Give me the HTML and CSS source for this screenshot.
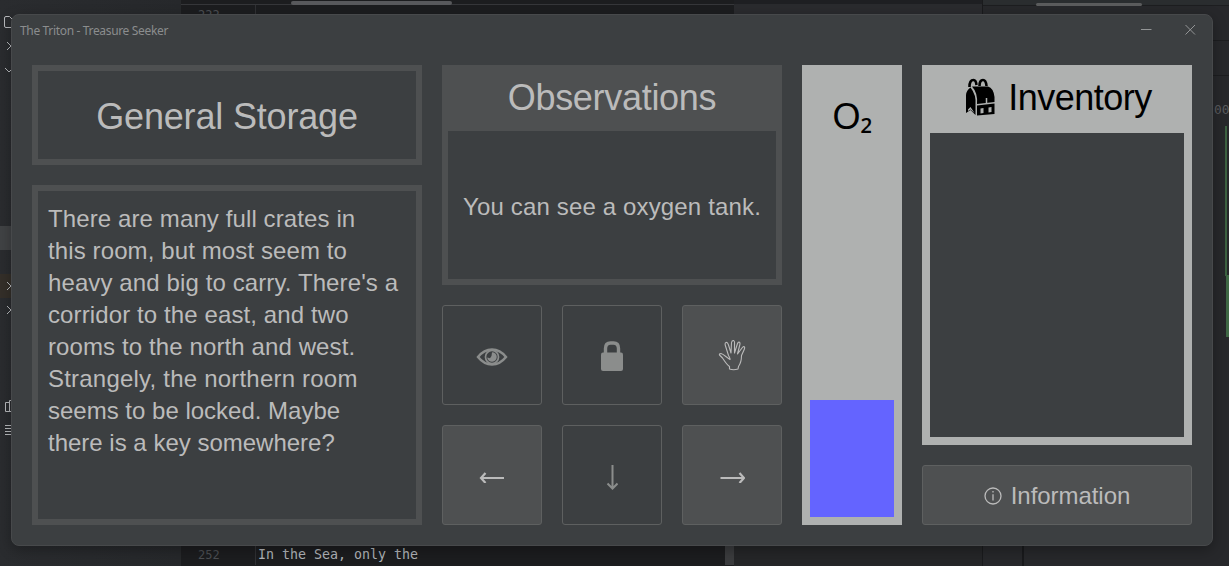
FILE: index.html
```html
<!DOCTYPE html>
<html lang="en">
<head>
<meta charset="utf-8">
<title>The Triton - Treasure Seeker</title>
<link rel="stylesheet" href="styles.css">
</head>
<body>
<div class="desktop">
  <aside class="tree">
    <svg class="tree-icons" width="12" height="566" viewBox="0 0 12 566" fill="none">
      <path class="row-selected" d="M0 226h12v24H0z"/>
      <path class="row-excluded" d="M0 274h12v24H0z"/>
      <path class="stroke" d="M12 27.500H6Q4.500 27.500 4.500 26V18Q4.500 16.500 6 16.500H9.500L12 19"/>
      <path class="stroke" d="M7 42l4 4-4 4M5 68l4 4 4-4M7 282l4 4-4 4M7 306l4 4-4 4"/>
      <path class="stroke" d="M12 411.500H5.500V402.500H9.500M9.500 411V400.500H12M5 425.500h7M5 428.500h7M5 431.500h7M5 434.500h7"/>
    </svg>
  </aside>
  <section class="editor">
    <div class="tabs"><span class="tab-thumb"></span></div>
    <div class="line first"><span class="num">222</span><span class="code"></span></div>
    <div class="line last"><span class="num">252</span><span class="code">In the Sea, only the</span></div>
  </section>
  <section class="side">
    <div class="side-top"></div>
    <div class="side-bottom"></div>
  </section>
  <section class="console">
    <div class="console-top"><span class="console-thumb"></span></div>
    <div class="bar"></div>
    <div class="bar"></div>
    <div class="output"><span class="digits">00</span></div>
    <div class="console-foot"></div>
  </section>
</div>

<main class="window">
  <header class="titlebar">
    <span class="title">The Triton - Treasure Seeker</span>
    <svg class="controls" width="58" height="14" viewBox="0 0 58 14" fill="none">
      <path d="M1 6.500h10.500M45.500 2l9.500 9.500M55 2l-9.500 9.500"/>
    </svg>
  </header>
  <div class="content">
    <div class="column">
      <h1 class="panel room">General Storage</h1>
      <div class="panel story">There are many full crates in<br>this room, but most seem to<br>heavy and big to carry. There's a<br>corridor to the east, and two<br>rooms to the north and west.<br><span class="loose">Strangely, the northern room</span><br><span class="tight">seems to be locked. Maybe</span><br><span class="tight">there is a key somewhere?</span></div>
    </div>
    <div class="column">
      <section class="panel observations">
        <h2 class="heading">Observations</h2>
        <p class="seen">You can see a oxygen tank.</p>
      </section>
      <div class="actions">
        <button class="btn off" aria-label="Look">
          <svg width="32" height="20" viewBox="0 0 32 20" fill="none" stroke="currentColor">
            <path stroke-width="2.500" d="M2 10Q8 2.500 16 2.500T30 10Q24 17.500 16 17.500T2 10Z"/>
            <circle cx="16" cy="10" r="6.500" stroke-width="1.700"/>
            <path d="M16 5.200A4.800 4.800 0 1 1 11.200 10.500L14 11.200L15.500 9Z" fill="currentColor" stroke="none"/>
          </svg>
        </button>
        <button class="btn off" aria-label="Unlock">
          <svg class="lock" width="24" height="32" viewBox="0 0 24 32" fill="none">
            <path d="M5.500 14V8.500Q5.500 3 10.500 3H13.500Q18.500 3 18.500 8.500V14" stroke="currentColor" stroke-width="3.400"/>
            <rect x="1" y="12.500" width="22" height="18.500" rx="2" fill="currentColor"/>
          </svg>
        </button>
        <button class="btn" aria-label="Take">
          <svg class="hand" width="28" height="32" viewBox="0 0 28 32" fill="none" stroke="currentColor" stroke-width="1.100" stroke-linejoin="round">
            <path d="M11.500 30V27.500C8.500 25.500 6.500 22 4.500 19L1.500 16Q1 14.500 3 14.500C5.500 15 8.500 18.500 12 20.500Q12.500 19.500 10.500 16.500L7.500 7Q6.500 4 8 3.500Q9.500 3 10.500 6L13 14L13.500 3.500Q14 1.300 15.500 1.500Q16.800 2 16.500 4.500V14L19.500 4.500Q20.500 2.500 21.500 3.200Q22.500 4 21.500 7L19.500 15L24 9Q25.500 7 26.500 8Q27 9 26 11L23.500 16.500C23.500 22 23 24 20.500 27.500L20 30Q15.500 31.500 11.500 30Z"/>
          </svg>
        </button>
        <button class="btn" aria-label="West">
          <svg width="26" height="12" viewBox="0 0 26 12" fill="none" stroke="currentColor" stroke-width="2.200"><path d="M25 7H2.500M6.500 2L2 7L6.500 12"/></svg>
        </button>
        <button class="btn off" aria-label="South">
          <svg width="12" height="26" viewBox="0 0 12 26" fill="none" stroke="currentColor" stroke-width="2"><path d="M6.500 1V24M1.500 19.500L6.500 24.500L11.500 19.500"/></svg>
        </button>
        <button class="btn" aria-label="East">
          <svg width="26" height="12" viewBox="0 0 26 12" fill="none" stroke="currentColor" stroke-width="2.200"><path d="M1.500 7H25M20.500 2L25 7L20.500 12"/></svg>
        </button>
      </div>
    </div>
    <div class="oxygen">
      <div class="oxygen-label">O<span class="two">₂</span></div>
      <div class="oxygen-level"></div>
    </div>
    <div class="column">
      <section class="inventory">
        <h2 class="inventory-title">
          <svg class="pack" width="32" height="38" viewBox="0 0 32 38" fill="none">
            <path d="M5.500 9Q5.500 2 9.500 2Q12 2 12.500 7M15.500 8Q15.500 2 19 2Q22 2 22.500 8" stroke="#000" stroke-width="2.600"/>
            <path d="M8 8.500H24Q29.500 10 30.500 19V24L13 26Q14 15 8 8.500Z" fill="#000"/>
            <path d="M6.500 9.500Q12.500 17 11.500 27V37L6.500 32L2 35V17Q2.500 12 6.500 9.500Z" fill="#000"/>
            <path d="M13 27.500L30.500 25.500V36L13 37.500Z" fill="#000"/>
            <path d="M22.500 20V26" stroke="#afb1b0" stroke-width="1.500"/>
            <path d="M16.500 30.500l3-.5v5l-3 .5zM24.500 29.500l3-.5v5l-3 .5zM4 31.500l2.500-2.500 4 6-4-3.500-2.500 1.500z" fill="#afb1b0"/>
          </svg>
          <span class="inventory-text">Inventory</span>
        </h2>
        <div class="slots"></div>
      </section>
      <button class="btn info">
        <svg width="18" height="18" viewBox="0 0 18 18" fill="none" stroke="currentColor" stroke-width="1.300"><circle cx="9" cy="9" r="8"/><path d="M9 7.200V13.500M9 4V5.500"/></svg>
        <span>Information</span>
      </button>
    </div>
  </div>
</main>
</body>
</html>
```
FILE: styles.css
```css
* { box-sizing: border-box; }
body { margin: 0; width: 1229px; height: 566px; overflow: hidden; font-family: "Liberation Sans", Arial, sans-serif; }
h1, h2, p { margin: 0; font-weight: 400; }

.desktop { display: grid; grid-template-columns: 180px 554px 248px 1fr; height: 566px; background: #2b2d30; }
.tree { background: linear-gradient(90deg, #2a2c2f, #26282b); }
.tree-icons { display: block; }
.stroke { stroke: #b8babd; }
.row-selected { fill: #414345; }
.row-excluded { fill: #342f29; }

.editor { display: flex; flex-direction: column; background: #1c1d1f; border-left: 1px solid #27292b; font: 13.300px "DejaVu Sans Mono", monospace; overflow: hidden; }
.tabs { height: 5px; border-bottom: 1px solid #36373a; padding: 1px 0 0 110px; }
.tab-thumb { display: block; width: 161px; height: 4px; border-radius: 2px; background: #58595c; }
.line { display: flex; height: 20px; line-height: 20px; }
.num { width: 75px; padding-left: 17px; font-size: 12px; color: #4c4f53; border-right: 1px solid #303134; }
.code { padding-left: 2px; color: #b2b5ba; }
.last { margin-top: auto; margin-bottom: 1px; border-right: 9px solid #3b3c3e; }

.side { display: flex; flex-direction: column; justify-content: space-between; background: #252628; }
.side-top { height: 14px; background: #2a2b2e; border-top: 4px solid #1e1f22; }
.side-bottom { height: 20px; background: #252628; }

.console { display: flex; flex-direction: column; border-left: 1px solid #1a1b1d; background: #27282b; }
.console-top { height: 6px; background: #2a2d2f; border-bottom: 1px solid #1d1e20; padding: 3px 0 0 53px; }
.console-thumb { display: block; width: 106px; height: 3px; border-radius: 2px; background: #5b5c5d; }
.bar { height: 35px; border-bottom: 1px solid #1d1e20; }
.output { flex: 1; padding: 26px 0 0 231px; }
.digits { display: block; width: 15px; height: 237px; overflow: hidden; font: 13px "DejaVu Sans Mono", monospace; color: #5a5c5e; background: linear-gradient(#3c6241, #3c6241) 11px 24px / 2px 150px no-repeat, linear-gradient(#3f6845, #3f6845) 12px 173px / 3px 62px no-repeat; }
.console-foot { height: 20px; margin-left: 39px; border-left: 2px solid #191a1c; }

.window { position: absolute; left: 11px; top: 14px; width: 1202px; height: 532px; padding: 0 20px 20px; background: #3c3f41; border: 1px solid #47494b; border-radius: 8px; box-shadow: 0 4px 14px rgba(0, 0, 0, .3); }
.titlebar { display: flex; justify-content: space-between; height: 50px; margin-left: -12px; padding-top: 8px; }
.title { font: 12px/16px "Noto Sans", sans-serif; letter-spacing: -.340px; color: #8b8d8e; }
.controls { margin-right: -6px; stroke: #939596; }
.content { display: grid; grid-template-columns: 390px 340px 100px 270px; gap: 20px; height: 460px; color: #bbb; }
.column { display: flex; flex-direction: column; gap: 20px; }
.panel { border: 6px solid #4e5051; }
.room { height: 100px; font-size: 36px; line-height: 92px; letter-spacing: -.180px; text-align: center; }
.story { flex: 1; padding: 12px 0 0 10px; font-size: 24px; line-height: 32px; letter-spacing: .110px; white-space: nowrap; }
.loose { letter-spacing: .210px; }
.tight { letter-spacing: 0; }
.observations { display: flex; flex-direction: column; height: 220px; }
.heading { flex: 0 0 60px; font-size: 36px; line-height: 54px; letter-spacing: -.300px; text-align: center; background: #4e5051; }
.seen { flex: 1; font-size: 24px; line-height: 152px; letter-spacing: .150px; text-align: center; white-space: nowrap; }
.actions { display: grid; grid-template-columns: repeat(3, 100px); grid-auto-rows: 100px; gap: 20px; }
.btn { display: flex; align-items: center; justify-content: center; padding: 4px 0 0; font: inherit; color: #bbb; background: #4e5051; border: 1px solid #5e6060; border-radius: 3px; }
.off { color: #8b8d8c; background: #3c3f41; }
.lock { margin-bottom: 3px; }
.hand { margin-bottom: 4px; }
.info { height: 60px; gap: 9px; padding: 2px 0 0; font-size: 24px; }
.info span { letter-spacing: -.050px; }
.oxygen { display: flex; flex-direction: column; justify-content: space-between; padding: 8px; background: #afb1b0; }
.oxygen-label { padding: 23px 0 0 1px; font-size: 36px; line-height: 41px; text-align: center; color: #000; }
.two { font-family: "Noto Sans", sans-serif; font-size: 34px; line-height: 0; }
.oxygen-level { height: 117px; background: #6464ff; }
.inventory { display: flex; flex-direction: column; height: 380px; padding: 0 8px 8px; background: #afb1b0; }
.inventory-title { display: flex; align-items: center; justify-content: center; gap: 12px; height: 68px; padding-left: 2px; font-size: 36px; color: #000; }
.pack { margin-top: -4px; }
.inventory-text { line-height: 66px; margin-top: -2px; letter-spacing: -.500px; }
.slots { flex: 1; background: #3c3f41; }
```
